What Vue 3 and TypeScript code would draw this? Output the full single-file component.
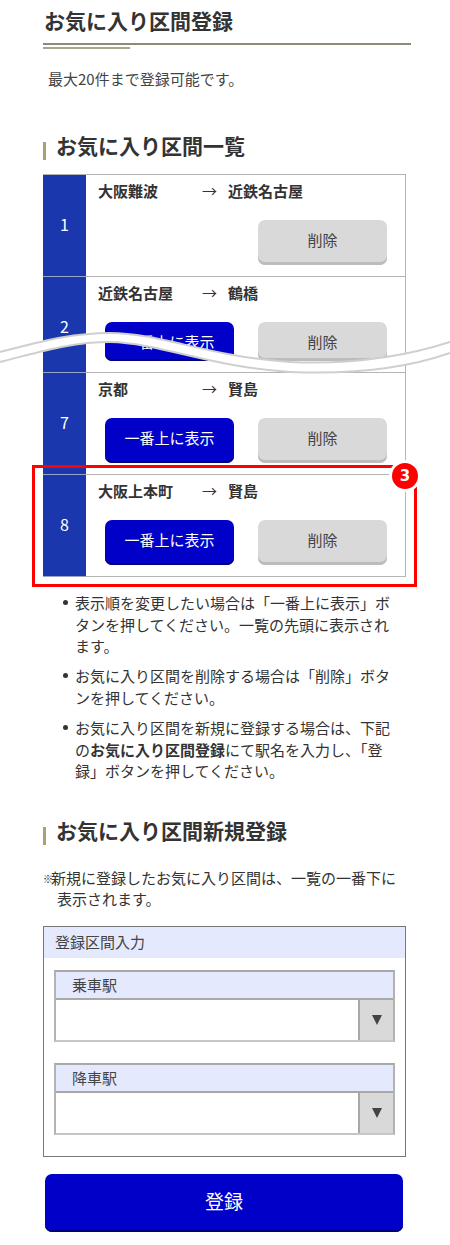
<script setup lang="ts">
interface Row { no: number; from: string; to: string; top: boolean; short?: boolean }
const rows: Row[] = [
  { no: 1, from: '大阪難波', to: '近鉄名古屋', top: false },
  { no: 2, from: '近鉄名古屋', to: '鶴橋', top: true, short: true },
  { no: 7, from: '京都', to: '賢島', top: true },
  { no: 8, from: '大阪上本町', to: '賢島', top: true },
]
const stations = ['乗車駅', '降車駅']
</script>

<template>
  <main class="page">
    <h1 class="title">お気に入り区間登録</h1>
    <p class="lead">最大20件まで登録可能です。</p>

    <h2 class="heading first">お気に入り区間一覧</h2>
    <div class="table-wrap">
      <div class="table">
        <div v-for="r in rows" :key="r.no" class="row" :class="{ short: r.short }">
          <div class="no">{{ r.no }}</div>
          <div class="cell">
            <div class="route">
              <span class="from">{{ r.from }}</span>
              <span class="arrow">→</span>
              <span class="to">{{ r.to }}</span>
            </div>
            <div class="actions">
              <button v-if="r.top" class="btn primary" type="button">一番上に表示</button>
              <button class="btn grey" type="button">削除</button>
            </div>
          </div>
        </div>
      </div>
      <svg class="wave" width="450" height="60" viewBox="0 0 450 60" aria-hidden="true">
        <path class="band" d="M0 27C40 17 70 8 110 8C160 8 210 32 290 37C360 40 410 30 450 17V28C410 42 360 50 290 47C210 42 160 18 110 17C70 17 40 27 0 37Z" />
        <path class="edge" d="M0 27C40 17 70 8 110 8C160 8 210 32 290 37C360 40 410 30 450 17" />
        <path class="edge" d="M0 37C40 27 70 17 110 17C160 18 210 42 290 47C360 50 410 42 450 28" />
      </svg>
      <div class="focus">
        <span class="badge">3</span>
      </div>
    </div>

    <ul class="notes">
      <li>表示順を変更したい場合は「一番上に表示」ボタンを押してください。一覧の先頭に表示されます。</li>
      <li>お気に入り区間を削除する場合は「削除」ボタンを押してください。</li>
      <li>お気に入り区間を新規に登録する場合は、下記の<b>お気に入り区間登録</b>にて駅名を入力し、「登録」ボタンを押してください。</li>
    </ul>

    <h2 class="heading second">お気に入り区間新規登録</h2>
    <p class="remark"><span class="mark">※</span>新規に登録したお気に入り区間は、一覧の一番下に表示されます。</p>

    <section class="form">
      <div class="form-title">登録区間入力</div>
      <div class="fields">
        <div v-for="s in stations" :key="s" class="field">
          <div class="field-label">{{ s }}</div>
          <div class="select">
            <div class="select-value"></div>
            <div class="select-btn"><span class="tri"></span></div>
          </div>
        </div>
      </div>
    </section>

    <button class="submit" type="button">登録</button>
  </main>
</template>

<style>
html, body { margin: 0; padding: 0; background: #fff; }
</style>

<style scoped>
.page {
  width: 450px;
  height: 1245px;
  box-sizing: border-box;
  overflow: hidden;
  padding: 4px 44px 0 43px;
  font-family: "Noto Sans CJK JP", "Noto Sans", sans-serif;
  color: #333;
  font-size: 15px;
}
.title {
  position: relative;
  margin: 0;
  height: 39px;
  padding-left: 1px;
  font-size: 21px;
  line-height: 32px;
  font-weight: 700;
  color: #333;
  border-bottom: 2px solid #8f8b73;
  box-sizing: content-box;
  width: 367px;
}
.title::after {
  content: "";
  position: absolute;
  left: 0;
  bottom: -6px;
  width: 87px;
  height: 2px;
  background: #a8a58f;
}
.lead {
  margin: 23px 0 0 5px;
  line-height: 22px;
  color: #444;
  font-size: 15px;
}
.heading {
  margin: 0;
  padding-left: 13px;
  position: relative;
  font-size: 21px;
  line-height: 30px;
  font-weight: 700;
  color: #333;
}
.heading::before {
  content: "";
  position: absolute;
  left: 0;
  bottom: 0;
  width: 3px;
  height: 18px;
  background: #a8a277;
}
.first { margin-top: 40px; }
.second { margin-top: 33px; }
.table-wrap {
  position: relative;
  width: 363px;
  margin-top: 14px;
}
.table {
  border: 1px solid #b5b5b5;
  border-left: 0;
  border-bottom: 0;
}
.row {
  display: flex;
  height: 102px;
  border-bottom: 1px solid #b5b5b5;
  box-sizing: border-box;
}
.row.short { height: 96px; }
.no {
  width: 43px;
  flex: none;
  box-sizing: border-box;
  padding-bottom: 4px;
  margin-bottom: -1px;
  background: #1a37ad;
  color: #fff;
  display: flex;
  align-items: center;
  justify-content: center;
  font-size: 16px;
  border-bottom: 1px solid #9aa3c8;
}
.short .no { padding-top: 6px; }
.cell {
  flex: 1;
  padding: 5px 18px 0 12px;
  display: flex;
  flex-direction: column;
  min-width: 0;
}
.route {
  display: flex;
  height: 22px;
  line-height: 22px;
  font-weight: 700;
  color: #333;
  font-size: 15px;
}
.from { width: 104px; }
.arrow { width: 26px; font-weight: 400; }
.actions {
  display: flex;
  justify-content: flex-end;
  gap: 24px;
  margin-top: 18px;
}
.btn {
  width: 129px;
  height: 45px;
  border-radius: 7px;
  border: 0;
  padding: 0 0 6px;
  font: inherit;
  line-height: 1;
}
.primary {
  background: #0000c8;
  color: #fff;
  box-shadow: inset 0 -2px 0 #00007a;
}
.grey {
  background: #d9d9d9;
  color: #444;
  box-shadow: inset 0 -3px 0 #bcbcbc;
}
.short .btn { height: 39px; padding: 0; }
.wave {
  position: absolute;
  left: -43px;
  top: 151px;
  pointer-events: none;
}
.band { fill: #fff; }
.edge { fill: none; stroke: #cfcfcf; stroke-width: 2; }
.focus {
  position: absolute;
  left: -11px;
  top: 291px;
  width: 385px;
  height: 122px;
  box-sizing: border-box;
  border: 3px solid #fe0000;
}
.badge {
  position: absolute;
  right: -7px;
  top: -8px;
  width: 26px;
  height: 26px;
  border-radius: 50%;
  box-sizing: content-box;
  border: 3px solid #fff;
  background: #fe0000;
  color: #fff;
  font-family: "DejaVu Sans", sans-serif;
  font-size: 15px;
  font-weight: 700;
  line-height: 26px;
  text-align: center;
}
.notes {
  margin: 15px 0 0;
  padding: 0 14px 0 32px;
  list-style: none;
  font-size: 15px;
  line-height: 21.6px;
  color: #333;
}
.notes li {
  position: relative;
  margin-bottom: 8.5px;
}
.notes li::before {
  content: "";
  position: absolute;
  left: -12px;
  top: 8px;
  width: 5px;
  height: 5px;
  border-radius: 50%;
  background: #333;
}
.remark {
  margin: 22px 0 0;
  padding-left: 14px;
  text-indent: -14px;
  line-height: 21px;
  font-size: 15px;
  color: #333;
}
.mark {
  display: inline-block;
  width: 8px;
  text-indent: 0;
  font-size: 10px;
  line-height: 1;
  color: #222;
  vertical-align: 1px;
  white-space: nowrap;
}
.form {
  margin-top: 17px;
  width: 363px;
  height: 231px;
  box-sizing: border-box;
  border: 1px solid #777;
}
.form-title {
  height: 31px;
  line-height: 30px;
  padding-left: 11px;
  background: #e4e9fe;
  color: #444;
}
.fields {
  padding: 12px 10px 0 10px;
  display: flex;
  flex-direction: column;
  gap: 21px;
}
.field {
  border: 2px solid #b3b3b3;
  border-top-color: #a8a8a8;
  border-bottom-color: #c6c6c6;
}
.field-label {
  height: 28px;
  line-height: 25px;
  padding-left: 16px;
  box-sizing: border-box;
  background: #e4e9fe;
  border-bottom: 2px solid #a8a8a8;
  color: #444;
}
.select {
  display: flex;
  height: 40px;
}
.select-value { flex: 1; }
.select-btn {
  width: 33px;
  border-left: 2px solid #a8a8a8;
  background: #d9d9d9;
  display: flex;
  align-items: center;
  justify-content: center;
}
.tri {
  width: 0;
  height: 0;
  border-left: 5.5px solid transparent;
  border-right: 5.5px solid transparent;
  border-top: 10px solid #444;
}
.submit {
  display: block;
  width: 358px;
  height: 58px;
  margin: 17px 0 0 2px;
  border: 0;
  border-radius: 7px;
  background: #0000c8;
  color: #fff;
  font: inherit;
  font-size: 19px;
  padding: 0 0 5px;
  box-shadow: inset 0 -2px 0 #00007a;
}
</style>
